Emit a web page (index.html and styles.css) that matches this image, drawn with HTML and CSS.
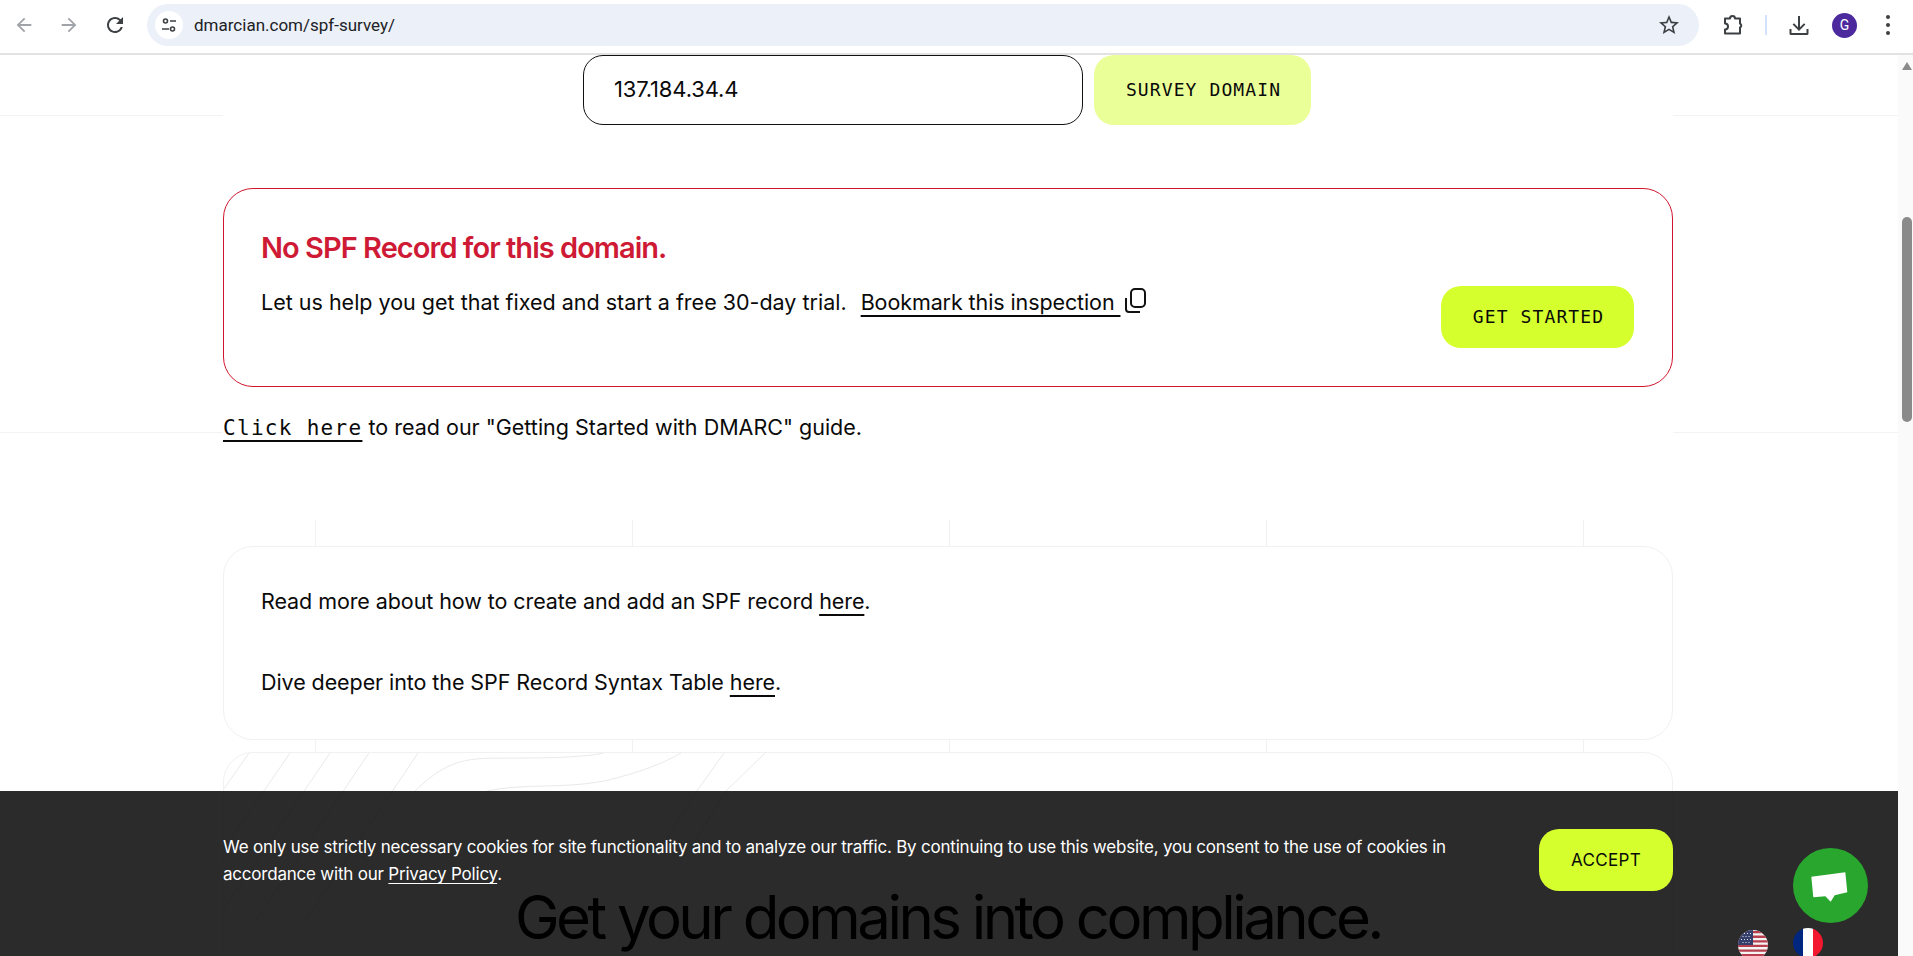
FILE: index.html

```html
<!DOCTYPE html>
<html lang="en">
<head>
    <meta charset="UTF-8">
    <meta name="viewport" content="width=device-width, initial-scale=1.0">
    <title>SPF Survey</title>
    <link rel="stylesheet" href="styles.css">
</head>
<body>
    <header class="toolbar">
        <div class="nav-icons">
            <svg class="tb-icon arrow dim" viewBox="0 0 24 24"><path d="M20 11H7.83l5.59-5.59L12 4l-8 8 8 8 1.41-1.41L7.83 13H20v-2z"/></svg>
            <svg class="tb-icon arrow dim" viewBox="0 0 24 24"><path d="M12 4l-1.41 1.41L16.17 11H4v2h12.17l-5.58 5.59L12 20l8-8z"/></svg>
            <svg class="tb-icon" viewBox="0 0 24 24"><path d="M17.65 6.35A7.96 7.96 0 0 0 12 4c-4.42 0-7.99 3.58-7.99 8s3.57 8 7.99 8c3.73 0 6.84-2.55 7.73-6h-2.08A5.99 5.99 0 0 1 12 18c-3.31 0-6-2.69-6-6s2.69-6 6-6c1.66 0 3.14.69 4.22 1.78L13 11h7V4l-2.35 2.35z"/></svg>
        </div>
        <div class="omnibox">
            <span class="site-info">
                <svg width="18" height="18" viewBox="0 0 18 18" fill="none" stroke="#3c4043" stroke-width="1.6"><circle cx="5.5" cy="5" r="2"/><path d="M10 5h6M2 13h7"/><circle cx="12.5" cy="13" r="2"/></svg>
            </span>
            <span class="url">dmarcian.com/spf-survey/</span>
            <svg class="star" viewBox="0 0 24 24"><path d="M22 9.24l-7.19-.62L12 2 9.19 8.63 2 9.24l5.46 4.73L5.82 21 12 17.27 18.18 21l-1.63-7.03L22 9.24zM12 15.4l-3.76 2.27 1-4.28-3.32-2.88 4.38-.38L12 6.1l1.71 4.04 4.38.38-3.32 2.88 1 4.28L12 15.4z"/></svg>
        </div>
        <div class="tb-right">
            <svg class="puzzle" width="24" height="24" viewBox="0 0 24 24" fill="none" stroke="#3c4043" stroke-width="2" stroke-linejoin="round"><path d="M4 6h5a2.5 2.5 0 0 1 5 0h5v5a2.2 2.2 0 0 1 0 4v6H4v-4a2.8 2.8 0 0 0 0-6z" transform="translate(0 -.5)"/></svg>
            <span class="tb-divider"></span>
            <svg class="download" width="24" height="24" viewBox="0 0 24 24" fill="#3c4043"><path d="M11 3h2v11.2l4-4 1.4 1.4L12 18l-6.4-6.4L7 10.2l4 4z"/><path d="M2.5 16h2v4h15v-4h2v4.5a1.5 1.5 0 0 1-1.5 1.5H4a1.5 1.5 0 0 1-1.5-1.5z"/></svg>
            <span class="avatar">G</span>
            <span class="kebab"><i></i><i></i><i></i></span>
        </div>
    </header>

    <div class="viewport">
        <main class="page">
            <div class="top">
                <form class="survey-form">
                    <input class="survey-input" type="text" value="137.184.34.4">
                    <button class="btn btn-pale" type="button">SURVEY DOMAIN</button>
                </form>

                <section class="alert">
                    <div>
                        <h2 class="alert-title">No SPF Record for this domain.</h2>
                        <p class="alert-text">
                            <span>Let us help you get that fixed and start a free 30-day trial.</span>
                            <a class="bookmark" href="#">Bookmark this inspection&nbsp;</a>
                            <svg class="copy-icon" width="24" height="26" viewBox="0 0 24 26" fill="none" stroke="#111" stroke-width="2"><rect x="7" y="1" width="14" height="18" rx="4"/><path d="M2 10v11a3 3 0 0 0 3 3h11"/></svg>
                        </p>
                    </div>
                    <button class="btn btn-lime" type="button">GET STARTED</button>
                </section>

                <p class="guide"><a class="guide-link" href="#">Click here</a> to read our "Getting Started with DMARC" guide.</p>
            </div>

            <div class="lower">
                <section class="card info-card">
                    <p>Read more about how to create and add an SPF record <a href="#">here</a>.</p>
                    <p>Dive deeper into the SPF Record Syntax Table <a href="#">here</a>.</p>
                </section>
                <section class="card cta-card">
                    <svg class="pattern" width="560" height="200" viewBox="0 0 560 200" fill="none" stroke="#e9e9e9" stroke-width="1">
                        <path d="M25 0L-24 70M66 0L-20 125M106 0L-10 170M145 0L30 170M194 0L80 170"/>
                        <path d="M191 38C230 0 250 6 300 5C340 5 365 3 380 0"/>
                        <path d="M263 38C300 30 340 36 380 28C415 20 440 10 457 0"/>
                        <path d="M500 0L470 42L440 90M541 0L502 38L470 90"/>
                    </svg>
                    <h2 class="cta-title">Get your domains into compliance.</h2>
                </section>
            </div>

            <aside class="cookie-bar">
                <p class="cookie-text">We only use strictly necessary cookies for site functionality and to analyze our traffic. By continuing to use this website, you consent to the use of cookies in accordance with our <a href="#">Privacy Policy</a>.</p>
                <button class="accept" type="button">ACCEPT</button>
            </aside>

            <button class="chat" type="button" aria-label="Chat">
                <svg width="75" height="75" viewBox="0 0 75 75"><path d="M18.3 28.7L52.3 24.3L54.3 44.3L41.7 47.3L37.7 53.7L32.3 48.3L20.3 49.3z" fill="#fff"/></svg>
            </button>

            <div class="flags">
                <svg class="flag" width="30" height="30" viewBox="0 0 30 30">
                    <defs><clipPath id="us"><circle cx="15" cy="15" r="15"/></clipPath></defs>
                    <g clip-path="url(#us)">
                        <rect width="30" height="30" fill="#f4f4f4"/>
                        <path d="M0 1h30v2.3H0zM0 5.6h30v2.3H0zM0 10.2h30v2.3H0zM0 14.8h30v2.3H0zM0 19.4h30v2.3H0zM0 24h30v2.3H0zM0 28.6h30V31H0z" fill="#b8404e"/>
                        <rect width="15" height="15" fill="#34406b"/>
                        <path d="M3 3h1v1H3zM6 3h1v1H6zM9 3h1v1H9zM12 3h1v1h-1zM4.5 6h1v1h-1zM7.5 6h1v1h-1zM10.5 6h1v1h-1zM3 9h1v1H3zM6 9h1v1H6zM9 9h1v1H9zM12 9h1v1h-1zM4.5 12h1v1h-1zM7.5 12h1v1h-1zM10.5 12h1v1h-1z" fill="#e6e6ee"/>
                    </g>
                </svg>
                <svg class="flag flag-fr" width="30" height="30" viewBox="0 0 30 30">
                    <defs><clipPath id="fr"><circle cx="15" cy="15" r="15"/></clipPath></defs>
                    <g clip-path="url(#fr)">
                        <rect width="10" height="30" fill="#00267f"/>
                        <rect x="10" width="10" height="30" fill="#fff"/>
                        <rect x="20" width="10" height="30" fill="#f31830"/>
                    </g>
                </svg>
            </div>
        </main>

        <div class="scrollbar">
            <span class="scroll-up"></span>
            <span class="scroll-thumb"></span>
        </div>
    </div>
</body>
</html>
```

FILE: styles.css

```css
* { box-sizing: border-box; }
html, body { margin: 0; height: 956px; overflow: hidden; }
body { font-family: Inter, "Liberation Sans", sans-serif; color: #0a0a0a; background: #fff; display: flex; flex-direction: column; }
a { color: inherit; text-decoration: underline; text-decoration-thickness: 2px; text-underline-offset: 5px; text-decoration-skip-ink: none; }

/* browser toolbar */
.toolbar { height: 55px; flex: none; display: flex; padding-top: 4px; border-bottom: 2px solid #e2e2e2; background: #fff; }
.nav-icons { width: 147px; height: 42px; display: flex; align-items: center; padding-left: 13px; gap: 23px; }
.tb-icon { width: 24px; height: 24px; fill: #3c4043; }
.tb-icon.arrow { width: 22px; height: 22px; }
.tb-icon.dim { fill: #a0a3a7; }
.omnibox { width: 1552px; height: 42px; background: #ebf0f9; border-radius: 21px; display: flex; align-items: center; padding: 0 18px 0 8px; }
.site-info { width: 28px; height: 28px; border-radius: 50%; background: #fff; display: flex; align-items: center; justify-content: center; }
.url { margin-left: 11px; font-family: Roboto, sans-serif; font-size: 17px; color: #202124; flex: 1; }
.star { width: 24px; height: 24px; fill: #3c4043; }
.tb-right { flex: 1; height: 42px; display: flex; align-items: center; }
.puzzle { margin-left: 22px; }
.tb-divider { width: 2px; height: 20px; background: #d3e3fd; margin-left: 20px; }
.download { margin-left: 20px; }
.avatar { width: 25px; height: 25px; margin-left: 21px; border-radius: 50%; background: #4c2a9e; color: #fff; font: 14px Roboto, sans-serif; display: flex; align-items: center; justify-content: center; }
.kebab { margin-left: 29px; display: flex; flex-direction: column; gap: 4px; }
.kebab i { width: 4px; height: 4px; border-radius: 50%; background: #3c4043; }

/* page */
.viewport { flex: 1; display: flex; min-height: 0; }
.page {
    width: 1898px;
    flex: none;
    position: relative;
    overflow: hidden;
    background:
        linear-gradient(#f3f3f3, #f3f3f3) 0 60px / 100% 1px no-repeat,
        linear-gradient(#f3f3f3, #f3f3f3) 0 377px / 100% 1px no-repeat,
        repeating-linear-gradient(90deg, transparent 0 315px, #f1f1f1 315px 316px, transparent 316px 317px) 0 465px / 100% 500px no-repeat,
        #fff;
}
.top { width: 1450px; height: 465px; margin-left: 223px; background: #fff; }
.lower { width: 1450px; margin-left: 223px; padding-top: 26px; }

.survey-form { display: flex; gap: 11px; margin-left: 360px; height: 70px; }
.survey-input { width: 500px; height: 70px; border: 1px solid #111; border-radius: 20px; padding: 0 30px 2px; font-family: Inter, sans-serif; font-size: 22px; letter-spacing: -0.15px; color: #0a0a0a; background: #fff; }
.btn { border: none; border-radius: 20px; padding: 0 0 2px 2px; color: #0a0a0a; font-family: "DejaVu Sans Mono", monospace; font-size: 18px; letter-spacing: 1.1px; }
.btn-pale { width: 217px; height: 70px; background: #ebff99; }
.btn-lime { width: 193px; height: 62px; background: #d6ff2e; flex: none; }

.alert { margin-top: 63px; height: 199px; border: 1px solid #d0162f; border-radius: 30px; padding: 37px 38px 38px 37px; display: flex; justify-content: space-between; align-items: flex-end; }
.alert > div { align-self: flex-start; }
.alert-title { margin: 0; font-size: 29px; line-height: 44px; font-weight: 600; letter-spacing: -0.97px; color: #ce1a35; }
.alert-text { margin: 16px 0 0; font-size: 21.5px; line-height: 32px; display: flex; align-items: flex-end; }
.alert-text span { margin-right: 14px; }
.bookmark { letter-spacing: -0.1px; }
.copy-icon { margin: 0 0 4px 4px; }

.guide { margin: 24px 0 0; font-size: 21.5px; line-height: 32px; }
.guide-link { font-family: "DejaVu Sans Mono", monospace; font-size: 21px; letter-spacing: 1.3px; }

.card { border: 1px solid #f1f1f1; border-radius: 30px; background: #fff; }
.info-card { height: 194px; padding: 38px 37px 0; font-size: 21.5px; line-height: 32px; letter-spacing: -0.08px; }
.info-card p { margin: 0 0 49px; }
.cta-card { margin-top: 12px; height: 400px; padding-top: 136px; position: relative; overflow: hidden; }
.pattern { position: absolute; left: 0; top: 0; }
.cta-title { position: relative; margin: 0; text-align: center; font-size: 60px; line-height: 56px; font-weight: 400; letter-spacing: -3.55px; color: #000; }

/* cookie bar sits over the page */
.cookie-bar { position: absolute; left: 0; right: 0; bottom: 0; height: 165px; background: rgba(0, 0, 0, 0.83); padding: 38px 225px 0 223px; display: flex; justify-content: space-between; align-items: flex-start; }
.cookie-text { margin: 0; width: 1240px; padding-top: 5px; color: #fff; font-size: 17px; line-height: 27px; letter-spacing: -0.21px; }
.cookie-text a { text-decoration-thickness: 1px; text-underline-offset: 3px; }
.accept { width: 134px; height: 62px; border: none; border-radius: 20px; background: #d6ff2e; color: #0a0a0a; font-family: Inter, sans-serif; font-size: 17px; letter-spacing: 0.3px; }

.chat { position: absolute; left: 1793px; top: 793px; width: 75px; height: 75px; padding: 0; border: none; border-radius: 50%; background: #28a62d; }
.chat svg { display: block; }
.flags { position: absolute; left: 1738px; top: 875px; display: flex; gap: 25px; align-items: flex-start; }
.flag { display: block; }
.flag-fr { margin-top: -2px; }

.scrollbar { flex: 1; background: #fafafa; position: relative; }
.scroll-up { position: absolute; top: 7px; left: 4px; border: 5.5px solid transparent; border-top: 0; border-bottom: 8px solid #8a8a8a; }
.scroll-thumb { position: absolute; top: 162px; left: 4px; width: 10px; height: 205px; border-radius: 5px; background: #8a8a8a; }
```
